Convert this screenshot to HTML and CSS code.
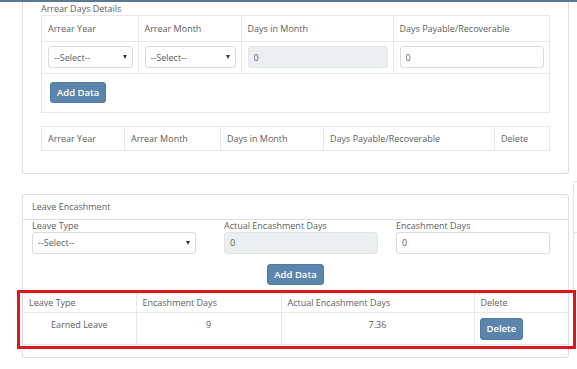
FILE: index.html
```html
<!DOCTYPE html>
<html lang="en">

<head>
    <meta charset="UTF-8">
    <meta name="viewport" content="width=device-width, initial-scale=1.0">
    <title>Arrear / Leave Encashment</title>
    <link rel="stylesheet" href="styles.css">
</head>

<body>
    <div class="topbar"></div>
    <div class="page">
        <div class="main-col">
            <!-- 欠款天数 -->
            <div class="panel panel-arrear">
                <div class="panel-title">Arrear Days Details</div>
                <div class="entry-box">
                    <table class="grid entry-grid">
                        <colgroup>
                            <col style="width:96px">
                            <col style="width:103px">
                            <col style="width:152px">
                            <col>
                        </colgroup>
                        <tr>
                            <th>Arrear Year</th>
                            <th>Arrear Month</th>
                            <th>Days in Month</th>
                            <th>Days Payable/Recoverable</th>
                        </tr>
                        <tr>
                            <td>
                                <div class="select-wrap">
                                    <select>
                                        <option>--Select--</option>
                                    </select>
                                </div>
                            </td>
                            <td>
                                <div class="select-wrap">
                                    <select>
                                        <option>--Select--</option>
                                    </select>
                                </div>
                            </td>
                            <td><input type="text" value="0" disabled></td>
                            <td><input type="text" value="0"></td>
                        </tr>
                    </table>
                    <div class="entry-actions">
                        <span class="btn">Add Data</span>
                    </div>
                </div>
                <table class="grid list-grid">
                    <colgroup>
                        <col style="width:83px">
                        <col style="width:96px">
                        <col style="width:103px">
                        <col style="width:171px">
                        <col>
                    </colgroup>
                    <tr>
                        <th>Arrear Year</th>
                        <th>Arrear Month</th>
                        <th>Days in Month</th>
                        <th>Days Payable/Recoverable</th>
                        <th>Delete</th>
                    </tr>
                </table>
            </div>

            <!-- 休假兑现 -->
            <div class="panel panel-leave">
                <div class="panel-heading">Leave Encashment</div>
                <div class="form-row">
                    <div class="field field-type">
                        <label>Leave Type</label>
                        <div class="select-wrap">
                            <select>
                                <option>--Select--</option>
                            </select>
                        </div>
                    </div>
                    <div class="field field-actual">
                        <label>Actual Encashment Days</label>
                        <input type="text" value="0" disabled>
                    </div>
                    <div class="field field-days">
                        <label>Encashment Days</label>
                        <input type="text" value="0">
                    </div>
                </div>
                <div class="form-actions">
                    <span class="btn">Add Data</span>
                </div>
                <div class="highlight-wrap">
                    <table class="grid leave-grid">
                        <colgroup>
                            <col style="width:113px">
                            <col style="width:145px">
                            <col style="width:193px">
                            <col>
                        </colgroup>
                        <tr>
                            <th>Leave Type</th>
                            <th>Encashment Days</th>
                            <th>Actual Encashment Days</th>
                            <th>Delete</th>
                        </tr>
                        <tr>
                            <td class="center">Earned Leave</td>
                            <td class="center">9</td>
                            <td class="center">7.36</td>
                            <td class="action"><span class="btn">Delete</span></td>
                        </tr>
                    </table>
                    <div class="highlight"></div>
                </div>
            </div>
        </div>
        <div class="side-col">
            <div class="side-panel">
                <div class="side-head"></div>
            </div>
        </div>
    </div>
</body>

</html>
```

FILE: styles.css
```css
* {
    margin: 0;
    padding: 0;
    box-sizing: border-box;
}

html,
body {
    height: 100%;
    overflow: hidden;
    background-color: #fff;
}

body {
    font-family: "Open Sans", "Liberation Sans", sans-serif;
    font-size: 9px;
    color: #606060;
}

/* 顶部线条 */

.topbar {
    height: 2px;
    background-color: #5b7891;
}

.page {
    display: flex;
    padding-left: 22px;
}

.main-col {
    width: 547px;
    flex-shrink: 0;
}

.panel {
    border: 1px solid #dedede;
    border-radius: 3px;
}

/* 第一块 */

.panel-arrear {
    border-top: none;
    border-radius: 0 0 3px 3px;
    padding: 0 18px 22px 18px;
}

.panel-title {
    height: 13px;
    line-height: 14px;
}

.entry-box {
    border: 1px solid #e8e8e8;
}

.grid {
    width: 100%;
    border-collapse: collapse;
    table-layout: fixed;
}

.grid th {
    font-weight: normal;
    text-align: left;
    padding: 0 6px;
    white-space: nowrap;
}

.grid th,
.grid td {
    border-right: 1px solid #e8e8e8;
}

.grid th:last-child,
.grid td:last-child {
    border-right: none;
}

.entry-grid th {
    height: 25px;
    border-bottom: 1px solid #e8e8e8;
}

.entry-grid td {
    height: 32px;
    padding: 0 5px 0 6px;
    border-bottom: 1px solid #e8e8e8;
}

.entry-actions {
    padding: 8px 8px 9px;
}

.list-grid {
    margin-top: 13px;
    border: 1px solid #e8e8e8;
}

.list-grid th {
    height: 24px;
}

/* 表单控件 */

select,
input {
    display: block;
    width: 100%;
    height: 22px;
    border: 1px solid #dcdcdc;
    border-radius: 3px;
    background-color: #fff;
    font-family: inherit;
    font-size: 9px;
    color: #606060;
    padding: 0 5px;
    outline: none;
    appearance: none;
    -webkit-appearance: none;
}

input[disabled] {
    background-color: #eceff0;
    border-color: #e3e6e8;
}

.select-wrap {
    position: relative;
}

.select-wrap::after {
    content: "";
    position: absolute;
    right: 6px;
    top: 9px;
    border: 2px solid transparent;
    border-top: 4px solid #333;
    border-bottom: none;
}

.btn {
    display: inline-block;
    height: 21px;
    line-height: 19px;
    padding: 0 6px;
    color: #fff;
    font-size: 9.5px;
    font-weight: 600;
    background-color: #5b85ad;
    border: 1px solid #4f79a1;
    border-radius: 3px;
}

/* 第二块 */

.panel-leave {
    margin-top: 20px;
    padding-bottom: 12px;
}

.panel-heading {
    height: 25px;
    line-height: 24px;
    padding-left: 9px;
    border-bottom: 1px solid #dedede;
}

.form-row {
    display: flex;
    padding-left: 9px;
}

.field label {
    display: block;
    height: 12px;
    line-height: 12px;
}

.field-type {
    width: 164px;
}

.field-actual {
    width: 154px;
    margin-left: 28px;
}

.field-days {
    width: 154px;
    margin-left: 18px;
}

.form-actions {
    text-align: center;
    padding: 10px 0 8px;
}

.highlight-wrap {
    position: relative;
}

.leave-grid {
    border-top: 1px solid #e8e8e8;
    border-bottom: 1px solid #e8e8e8;
}

.leave-grid th {
    height: 19px;
    border-bottom: 1px solid #e8e8e8;
}

.leave-grid td {
    height: 32px;
    vertical-align: top;
    padding: 5px 6px 4px;
    line-height: 13px;
}

.leave-grid .center {
    text-align: center;
}

.leave-grid .action {
    padding-left: 5px;
}

.leave-grid .btn {
    height: 22px;
    line-height: 20px;
}

/* 红色标注框 */

.highlight {
    position: absolute;
    left: -6px;
    top: -3px;
    right: -8px;
    bottom: -4px;
    border: 3px solid #e3141c;
}

/* 右侧露出的面板 */

.side-col {
    width: 4px;
    margin-left: 4px;
    flex-shrink: 0;
}

.side-panel {
    margin-top: 179px;
    height: 110px;
    border: 1px solid #e3e3e3;
    border-right: none;
    border-radius: 3px 0 0 3px;
}

.side-head {
    height: 51px;
    border-bottom: 1px solid #e3e3e3;
}
```
